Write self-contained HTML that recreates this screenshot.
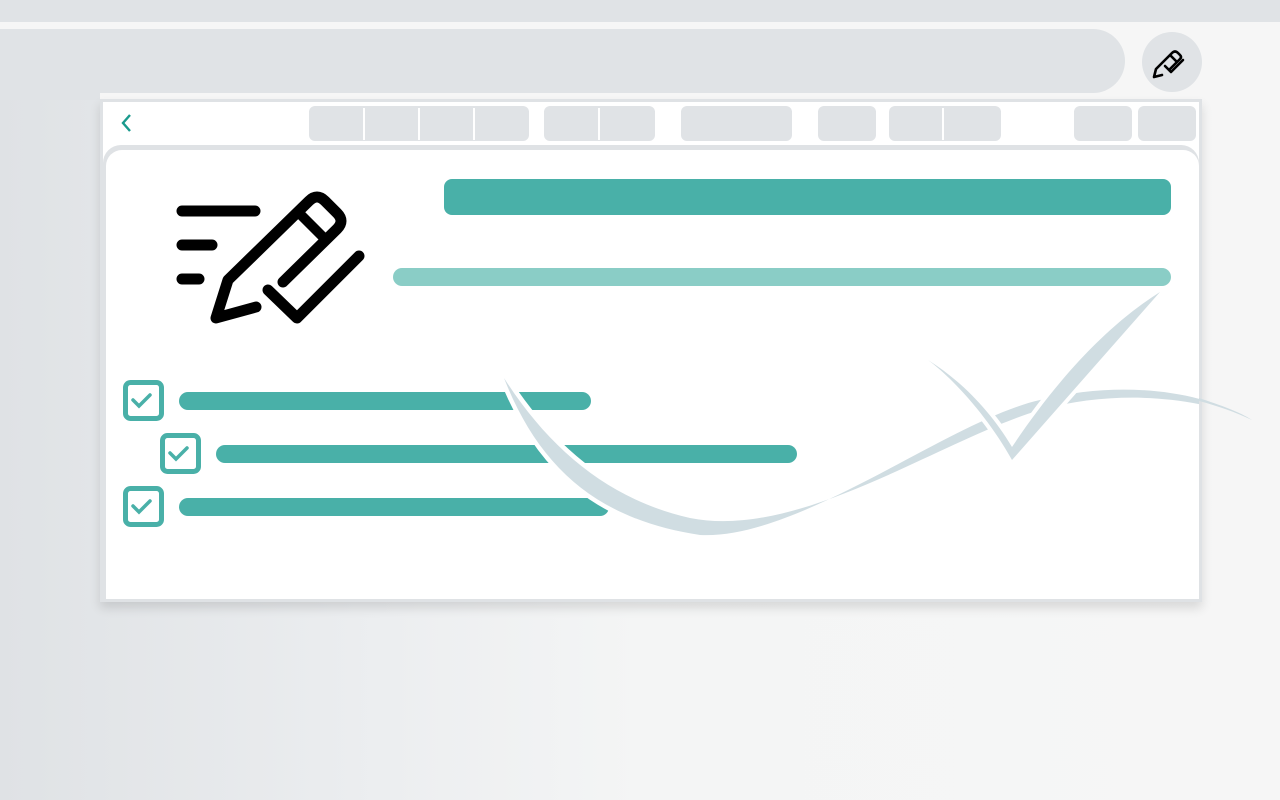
<!DOCTYPE html>
<html><head><style>
body{margin:0;width:1280px;height:800px;overflow:hidden;background:linear-gradient(90deg,#dfe2e5 0%,#eceef0 30%,#f4f5f5 50%,#f6f6f6 100%);font-family:"Liberation Sans",sans-serif;position:relative}
.a{position:absolute}
.tb{background:#e0e3e6;border-radius:6px}
</style></head><body>
<div class="a" style="left:0;top:0;width:1280px;height:22px;background:#e0e3e6"></div>
<div class="a" style="left:0;top:22px;width:1280px;height:78px;background:#f6f6f6"></div>
<div class="a" style="left:-40px;top:29px;width:1165px;height:64px;background:#e0e3e6;border-radius:32px"></div>
<div class="a" style="left:0;top:93px;width:100px;height:7px;background:#e0e3e6"></div>
<div class="a" style="left:1142px;top:32px;width:60px;height:60px;background:#e0e3e6;border-radius:50%"></div>
<svg class="a" style="left:1150px;top:42px" width="44" height="40" viewBox="0 0 44 40" fill="none" stroke="#000" stroke-width="2.6" stroke-linejoin="round" stroke-linecap="round">
<path d="M12 33 L4 35 L6 27 L22 11 Q25 8 28 11 L30 13 Q32 15 30 17 L20 27"/><path d="M21 14 L26 19"/><path d="M15 24 L21 30 L33 18"/></svg>
<div class="a" style="left:100px;top:99px;width:1102px;height:503px;background:#dfe2e5;box-shadow:0 6px 10px rgba(0,0,0,.12)"></div>
<div class="a" style="left:103px;top:102px;width:1096px;height:497px;background:#fff"></div>
<svg class="a" style="left:116px;top:112px" width="20" height="22"><path d="M14 3 L7 11 L14 19" stroke="#1a9a8d" stroke-width="2.4" fill="none"/></svg>
<div class="a tb" style="left:309px;top:106px;width:220px;height:35px"></div>
<div class="a" style="left:363px;top:108px;width:2px;height:32px;background:#fff"></div>
<div class="a" style="left:418px;top:108px;width:2px;height:32px;background:#fff"></div>
<div class="a" style="left:473px;top:108px;width:2px;height:32px;background:#fff"></div>
<div class="a tb" style="left:544px;top:106px;width:111px;height:35px"></div>
<div class="a" style="left:598px;top:108px;width:2px;height:32px;background:#fff"></div>
<div class="a tb" style="left:681px;top:106px;width:111px;height:35px"></div>
<div class="a tb" style="left:818px;top:106px;width:58px;height:35px"></div>
<div class="a tb" style="left:889px;top:106px;width:112px;height:35px"></div>
<div class="a" style="left:942px;top:108px;width:2px;height:32px;background:#fff"></div>
<div class="a tb" style="left:1074px;top:106px;width:58px;height:35px"></div>
<div class="a tb" style="left:1138px;top:106px;width:58px;height:35px"></div>
<div class="a" style="left:103px;top:145px;width:1096px;height:454px;background:#dfe2e5;border-radius:18px 18px 0 0"></div>
<div class="a" style="left:106px;top:150px;width:1093px;height:449px;background:#fff;border-radius:16px 16px 0 0"></div>
<div class="a" style="left:444px;top:179px;width:727px;height:36px;background:#49b0a8;border-radius:8px"></div>
<div class="a" style="left:393px;top:268px;width:778px;height:18px;background:#8acdc6;border-radius:9px"></div>
<svg class="a" style="left:170px;top:185px" width="200" height="145" viewBox="170 185 200 145" fill="none" stroke="#000" stroke-width="11" stroke-linecap="round" stroke-linejoin="round">
<path d="M182 211 H255 M182 245 H212 M182 279 H199"/>
<path d="M256 307 L216 318 L228 280 L309 201 Q317 193 325 201 L337 213 Q345 221 337 229 L283 282" />
<path d="M298 212 L325 239" stroke-linecap="butt" stroke-width="10"/>
<path d="M268 290 L297 318 L359 256"/>
</svg>
<svg class="a" style="left:0;top:0" width="1280" height="800">
<defs><clipPath id="c"><rect x="106" y="150" width="1093" height="449"/></clipPath></defs>
<g fill="#49b0a8"><rect x="179" y="392" width="412" height="18" rx="9"/><rect x="216" y="445" width="581" height="18" rx="9"/><rect x="179" y="498" width="430" height="18" rx="9"/></g>
<g fill="none" stroke="#49b0a8" stroke-width="5"><rect x="125.5" y="382.5" width="36" height="36" rx="5"/><rect x="162.5" y="435.5" width="36" height="36" rx="5"/><rect x="125.5" y="488.5" width="36" height="36" rx="5"/></g>
<g fill="none" stroke="#49b0a8" stroke-width="3.5" stroke-linecap="round"><path d="M133 400 L139 406 L150 395"/><path d="M170 453 L176 459 L187 448"/><path d="M133 506 L139 512 L150 501"/></g>
<path clip-path="url(#c)" d="M504 378 C540 470 600 520 700 535 C800 540 950 420 1040 400 C1120 380 1200 390 1252 420 C1200 398 1120 388 1040 410 C940 440 800 540 690 518 C610 500 550 450 504 378 Z" fill="#d0dde2" stroke="#fff" stroke-width="9" paint-order="stroke"/>
<path d="M1199 398 C1220 405 1240 412 1252 420 C1235 412 1218 406 1199 401 Z" fill="#d0dde2"/>
<path d="M928 360 C955 380 990 420 1012 460 L1160 292 C1100 330 1050 390 1012 447 C990 410 960 380 928 360 Z" fill="#d0dde2" stroke="#fff" stroke-width="8" paint-order="stroke"/>
</svg>
</body></html>
